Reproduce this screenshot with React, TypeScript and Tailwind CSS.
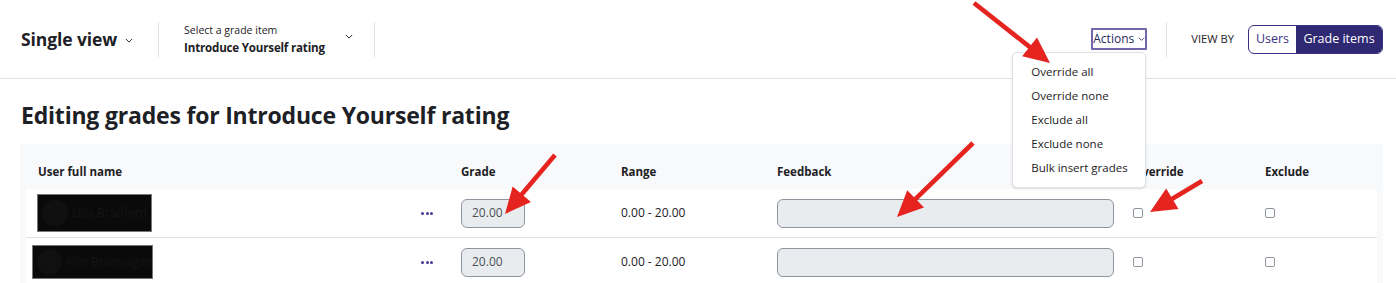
import React from 'react';

const font = { fontFamily: '"Open Sans", "Noto Sans", sans-serif' };

function Chevron({ className = '' }: { className?: string }) {
  return (
    <svg viewBox="0 0 10 6" className={className} fill="none" stroke="currentColor" strokeWidth="1.2">
      <path d="M1 1l4 4 4-4" />
    </svg>
  );
}

function arrowPoints(x1: number, y1: number, x2: number, y2: number) {
  const dx = x2 - x1;
  const dy = y2 - y1;
  const len = Math.hypot(dx, dy);
  const ux = dx / len;
  const uy = dy / len;
  const px = -uy;
  const py = ux;
  const head = 26;
  const hw = 12;
  const sw = 2.3;
  const bx = x2 - ux * head;
  const by = y2 - uy * head;
  const pts = [
    [x1 + px * sw, y1 + py * sw],
    [bx + px * sw, by + py * sw],
    [bx + px * hw, by + py * hw],
    [x2, y2],
    [bx - px * hw, by - py * hw],
    [bx - px * sw, by - py * sw],
    [x1 - px * sw, y1 - py * sw],
  ];
  return pts.map((p) => p.join(',')).join(' ');
}

const arrows = [
  [974, 3, 1050, 63],
  [555, 155, 505, 214],
  [973, 143, 897, 217],
  [1202, 181, 1150, 212],
];

function Checkbox() {
  return <span className="block w-[10px] h-[10px] rounded-[2px] border border-[#8f959e] bg-white" />;
}

const rows = [
  { name: 'Lisa Bradford', initials: '', box: 'ml-[11px] w-[115px] h-[38px]' },
  { name: 'Kim Brannagan', initials: 'KB', box: 'ml-[6px] w-[121px] h-[34px]' },
];

export default function App() {
  return (
    <div className="relative w-[1396px] h-[283px] overflow-hidden bg-white text-[#1d2125]" style={font}>
      <header className="h-[79px] flex items-center justify-between border-b border-[#dee2e6] pl-[21px] pr-[13px]">
        <div className="flex items-center">
          <div className="flex items-center gap-[8px]">
            <span className="text-[17.5px] font-bold tracking-[-0.1px]">Single view</span>
            <Chevron className="w-[8px] h-[5px] mt-[2px]" />
          </div>
          <div className="w-px h-[35px] bg-[#dee2e6] ml-[25px]" />
          <div className="flex items-center ml-[25px]">
            <div className="flex flex-col leading-tight pt-[2px]">
              <span className="text-[10.5px]">Select a grade item</span>
              <span className="text-[11.6px] font-bold tracking-[-0.2px] mt-[4px]">Introduce Yourself rating</span>
            </div>
            <Chevron className="w-[8px] h-[5px] ml-[20px] mb-[4px]" />
          </div>
          <div className="w-px h-[35px] bg-[#dee2e6] ml-[21px]" />
        </div>
        <div className="flex items-center">
          <div className="relative">
            <button className="h-[22px] w-[56px] flex items-center justify-center gap-[4px] border-2 border-[#6f67a9] text-[12px] text-[#1f2a5c] rounded-[1px]">
              Actions
              <Chevron className="w-[7px] h-[4px]" />
            </button>
            <div className="absolute right-[1px] top-[24px] w-[134px] bg-white border border-[#dee2e6] rounded-[5px] shadow-sm pt-[7px] pb-[7px] z-10">
              {['Override all', 'Override none', 'Exclude all', 'Exclude none', 'Bulk insert grades'].map((t) => (
                <div key={t} className="h-[24px] flex items-center pl-[18px] text-[11.5px] whitespace-nowrap">
                  {t}
                </div>
              ))}
            </div>
          </div>
          <div className="w-px h-[35px] bg-[#dee2e6] ml-[19px]" />
          <span className="ml-[24px] text-[11.2px]">VIEW BY</span>
          <div className="ml-[14px] flex h-[29px] border border-[#3a3183] rounded-[6px] overflow-hidden text-[12.5px]">
            <span className="w-[47px] flex items-center justify-center text-[#3a3183]">Users</span>
            <span className="w-[86px] flex items-center justify-center bg-[#2f2873] text-white">Grade items</span>
          </div>
        </div>
      </header>

      <h2 className="pl-[21px] mt-[21px] text-[23px] font-bold leading-[30px] tracking-[-0.2px]">
        Editing grades for Introduce Yourself rating
      </h2>

      <div className="ml-[20px] w-[1363px] mt-[14px] bg-[#f8f9fa] px-[6px] h-[200px]">
        <div className="grid grid-cols-[423px_160px_156px_356px_132px_1fr] h-[45px] items-center text-[11.5px] font-bold">
          <span className="pl-[12px] pt-[10px]">User full name</span>
          <span className="pl-[12px] pt-[10px]">Grade</span>
          <span className="pl-[12px] pt-[10px]">Range</span>
          <span className="pl-[12px] pt-[10px]">Feedback</span>
          <span className="pl-[12px] pt-[10px]">Override</span>
          <span className="pl-[12px] pt-[10px]">Exclude</span>
        </div>
        {rows.map((r) => (
          <div
            key={r.name}
            className="grid grid-cols-[423px_160px_156px_356px_132px_1fr] h-[49px] items-center bg-white border-b border-[#dee2e6] text-[12px]"
          >
            <div className="flex items-center justify-between pr-[16px]">
              <div className={`${r.box} bg-[#0a0a0a] border border-[#777] flex items-center gap-[4px] pl-[4px] text-[#141414] whitespace-nowrap overflow-hidden`}>
                <span className="w-[26px] h-[26px] rounded-full bg-[#101010] flex items-center justify-center text-[10px]">{r.initials}</span>
                <span className="text-[12px]">{r.name}</span>
              </div>
              <span className="flex gap-[1.5px]">
                <span className="w-[3px] h-[3px] rounded-full bg-[#473b95]" />
                <span className="w-[3px] h-[3px] rounded-full bg-[#473b95]" />
                <span className="w-[3px] h-[3px] rounded-full bg-[#473b95]" />
              </span>
            </div>
            <div className="pl-[12px]">
              <div className="w-[64px] h-[29px] rounded-[6px] border border-[#8f959e] bg-[#e9ecef] flex items-center pl-[10px] text-[#495057]">
                20.00
              </div>
            </div>
            <span className="pl-[12px]">0.00 - 20.00</span>
            <div className="pl-[12px]">
              <div className="w-[337px] h-[29px] rounded-[6px] border border-[#8f959e] bg-[#e9ecef]" />
            </div>
            <div className="pl-[12px]">
              <Checkbox />
            </div>
            <div className="pl-[12px]">
              <Checkbox />
            </div>
          </div>
        ))}
      </div>

      <svg className="absolute inset-0 pointer-events-none z-20" width="1396" height="283">
        {arrows.map(([a, b, c, d], i) => (
          <polygon key={i} points={arrowPoints(a, b, c, d)} fill="#e52420" />
        ))}
      </svg>
    </div>
  );
}
